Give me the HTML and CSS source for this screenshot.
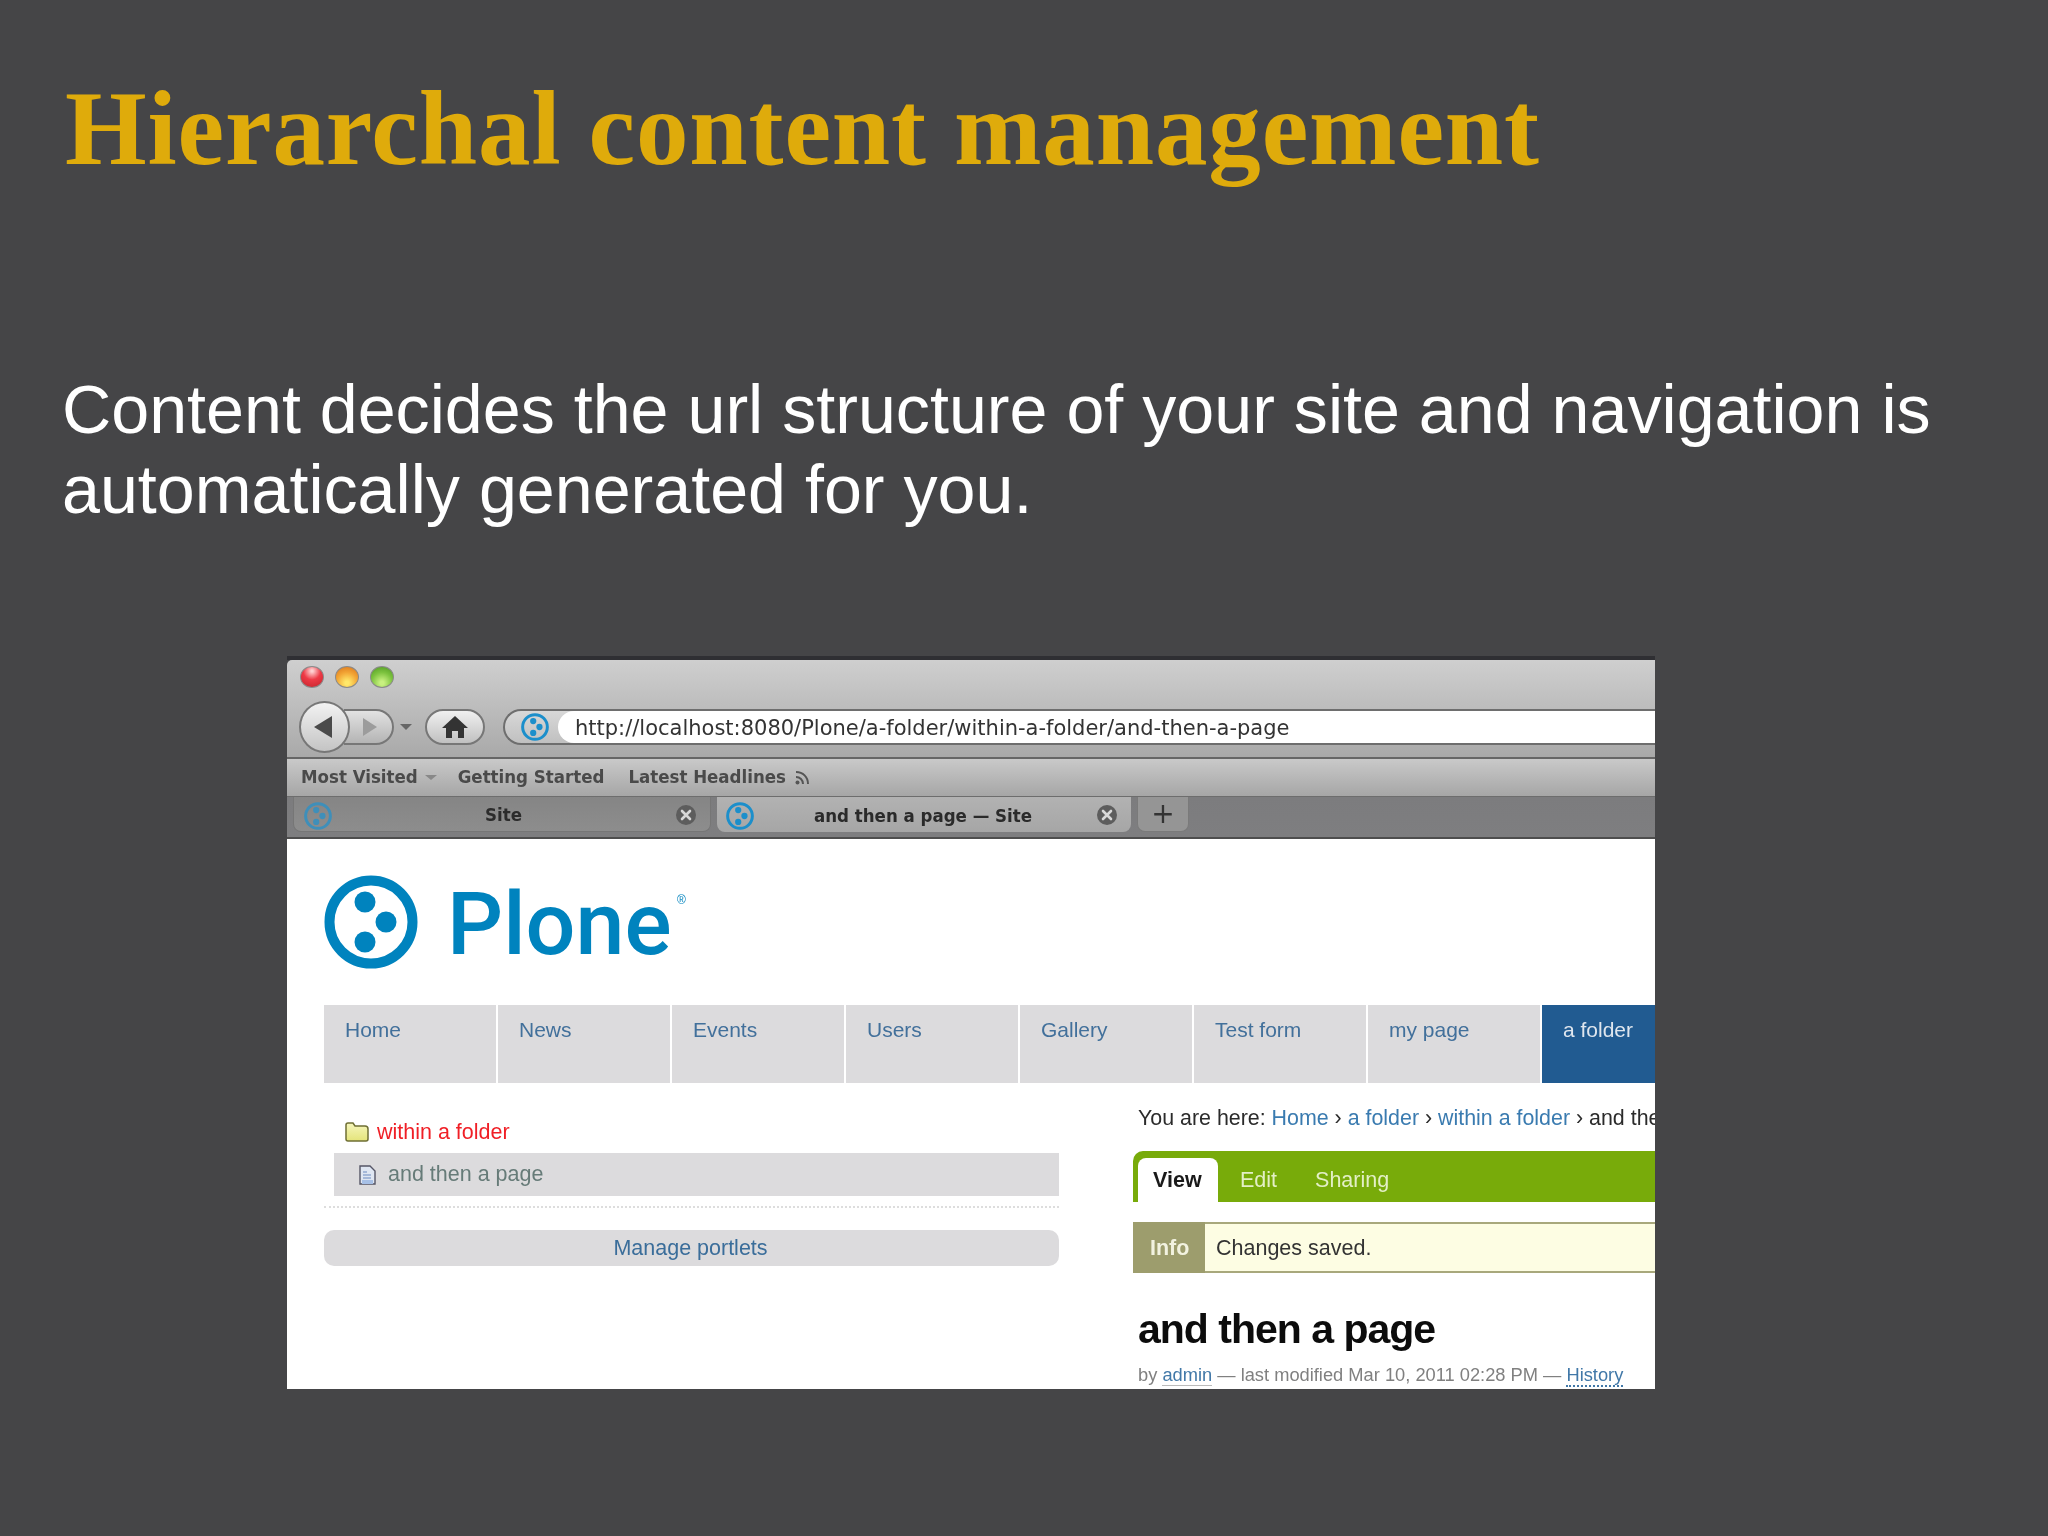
FILE: index.html
```html
<!DOCTYPE html>
<html lang="en">
<head>
<meta charset="utf-8">
<title>Hierarchal content management</title>
<link rel="stylesheet" href="styles.css">
</head>
<body>
<svg class="defs" width="0" height="0" aria-hidden="true">
  <symbol id="plone" viewBox="0 0 94 94">
    <circle cx="47" cy="47" r="41.500" fill="none" stroke="currentColor" stroke-width="10"/>
    <ellipse cx="41" cy="27" rx="10.500" ry="10.500" fill="currentColor"/>
    <ellipse cx="62" cy="47" rx="10.500" ry="10.500" fill="currentColor"/>
    <ellipse cx="41" cy="67" rx="10.500" ry="10.500" fill="currentColor"/>
  </symbol>
  <symbol id="close" viewBox="0 0 20 20">
    <circle cx="10" cy="10" r="10" fill="currentColor"/>
    <path d="M6 6l8 8M14 6l-8 8" stroke="#d8d8d8" stroke-width="2.6" stroke-linecap="round"/>
  </symbol>
</svg>
<main class="slide">
  <h1 class="title">Hierarchal content management</h1>
  <p class="lead">Content decides the url structure of your site and navigation is automatically generated for you.</p>
  <section class="shot">
    <header class="toolbar">
      <div class="lights"><span class="light red"></span><span class="light amber"></span><span class="light green"></span></div>
      <div class="navrow">
        <div class="backfwd">
          <span class="back"><svg width="20" height="24" viewBox="0 0 20 24"><path d="M19 1v22L1 12z" fill="#4a4a4a"/></svg></span>
          <span class="fwd"><svg width="16" height="20" viewBox="0 0 16 20"><path d="M1 1v18l14-9z" fill="#9c9c9c"/></svg></span>
        </div>
        <svg class="drop" width="12" height="6" viewBox="0 0 12 6"><path d="M0 0h12L6 6z" fill="#666"/></svg>
        <span class="home"><svg width="26" height="24" viewBox="0 0 26 24"><path d="M13 1L0 13h4v10h6v-7h6v7h6V13h4z" fill="#333"/></svg></span>
        <div class="url">
          <span class="site"><svg class="fav" width="28" height="28"><use href="#plone"/></svg></span>
          <span class="address">http://localhost:8080/Plone/a-folder/within-a-folder/and-then-a-page</span>
        </div>
      </div>
    </header>
    <nav class="bookmarks">
      <span class="bm">Most Visited</span>
      <svg class="bm-arrow" width="12" height="5" viewBox="0 0 12 5"><path d="M0 0h12L6 5z" fill="#888"/></svg>
      <span class="bm bm-2">Getting Started</span>
      <span class="bm bm-3">Latest Headlines</span>
      <svg class="rss" width="16" height="16" viewBox="0 0 16 16"><g fill="none" stroke="#555" stroke-width="2"><path d="M2 2c7 0 12 5 12 12"/><path d="M2 7c4 0 7 3 7 7"/></g><circle cx="3.500" cy="12.500" r="2" fill="#555"/></svg>
    </nav>
    <div class="tabs">
      <div class="tab off">
        <svg class="fav dim" width="28" height="28"><use href="#plone"/></svg>
        <span class="tab-label">Site</span>
        <svg class="close dark" width="20" height="20"><use href="#close"/></svg>
      </div>
      <div class="tab on">
        <svg class="fav" width="28" height="28"><use href="#plone"/></svg>
        <span class="tab-label strong">and then a page — Site</span>
        <svg class="close" width="20" height="20"><use href="#close"/></svg>
      </div>
      <div class="newtab">+</div>
    </div>
    <div class="page">
      <div class="logo">
        <svg class="logo-mark" width="94" height="94"><use href="#plone"/></svg>
        <span class="logo-word">Plone</span><span class="logo-reg">®</span>
      </div>
      <ul class="globalnav">
        <li>Home</li><li>News</li><li>Events</li><li>Users</li><li>Gallery</li><li>Test form</li><li>my page</li><li class="active">a folder</li>
      </ul>
      <div class="columns">
        <aside class="left">
          <div class="tree-folder">
            <svg width="24" height="20" viewBox="0 0 24 20"><defs><linearGradient id="fy" x1="0" y1="0" x2="0" y2="1"><stop offset="0" stop-color="#f6f6bc"/><stop offset="1" stop-color="#e4e47a"/></linearGradient></defs><path d="M1 17V3q0-2 2-2h5l2 3h10q3 0 3 3v10q0 2-2 2H3q-2 0-2-2z" fill="url(#fy)" stroke="#6f6f34" stroke-width="1.500"/></svg>
            <span>within a folder</span>
          </div>
          <div class="tree-page">
            <svg width="17" height="20" viewBox="0 0 17 20"><path d="M1 1h10l5 5v13H1z" fill="#dfe6f2" stroke="#556" stroke-width="1.400"/><path d="M3 15h11v4H3z" fill="#a7c0e6"/><path d="M4 7h4M4 10h8M4 13h8" stroke="#6c8ac0" stroke-width="1.200"/></svg>
            <span>and then a page</span>
          </div>
          <div class="dots"></div>
          <div class="manage">Manage portlets</div>
        </aside>
        <article class="right">
          <div class="crumbs">You are here: <a>Home</a> › <a>a folder</a> › <a>within a folder</a> › and then a page</div>
          <div class="views"><span class="view">View</span><span class="v-edit">Edit</span><span class="v-share">Sharing</span></div>
          <div class="info"><strong>Info</strong><span>Changes saved.</span></div>
          <h2 class="doc-title">and then a page</h2>
          <div class="byline">by <a class="solid">admin</a> — last modified Mar 10, 2011 02:28 PM — <a class="dotted">History</a></div>
        </article>
      </div>
    </div>
  </section>
</main>
</body>
</html>
```
FILE: styles.css
```css
* { box-sizing: border-box; }
html, body { margin: 0; padding: 0; background: #454547; }
.defs { position: absolute; }
.slide { width: 2048px; height: 1536px; overflow: hidden; background: #454547; }
.title {
  margin: 0 0 0 65px; padding-top: 69px; font: 700 105px/120px "Liberation Serif", serif;
  color: #dfab0b; letter-spacing: .85px; white-space: nowrap;
}
.lead {
  margin: 180px 0 0 62px; width: 1960px; font: 400 68.200px/80px "Liberation Sans", sans-serif; color: #fff;
}
.shot {
  margin: 127px 0 0 287px; width: 1368px; height: 733px; overflow: hidden;
  border-top: 4px solid #2f2f33; filter: blur(.5px); font-family: "Liberation Sans", sans-serif;
}
.toolbar {
  height: 99px; padding: 6px 0 0 12px; background: linear-gradient(#cfcfcf, #a9a9a9);
  border-radius: 5px 0 0 0; border-bottom: 2px solid #666;
}
.lights { display: flex; gap: 11px; height: 22px; margin: 0 0 13px 1px; }
.light { width: 24px; height: 22px; border-radius: 50%; border: 1px solid #8a8a8a; }
.red { background: radial-gradient(circle at 50% 20%, #ffd0d0 5%, #ee3a46 45%, #c2242c); }
.amber { background: radial-gradient(circle at 50% 80%, #ffe86a 10%, #f2a434 55%, #d8701a); }
.green { background: radial-gradient(circle at 50% 80%, #c8f080 10%, #7cc23e 55%, #4c9620); }
.navrow { display: flex; align-items: center; height: 52px; }
.backfwd { display: flex; align-items: center; }
.back {
  position: relative; z-index: 1; display: flex; align-items: center; justify-content: center;
  width: 51px; height: 52px; padding-right: 4px; border-radius: 50%; border: 2px solid #777;
  background: linear-gradient(#f2f2f2, #c4c4c4);
}
.fwd {
  display: flex; align-items: center; justify-content: center;
  width: 50px; height: 36px; margin-left: -6px; padding-left: 4px; border-radius: 0 18px 18px 0;
  border: 2px solid #777; border-left: 0; background: linear-gradient(#e2e2e2, #b4b4b4);
}
.drop { margin-left: 6px; }
.home {
  display: flex; align-items: center; justify-content: center;
  width: 60px; height: 36px; margin-left: 13px; border-radius: 18px; border: 2px solid #777;
  background: linear-gradient(#f0f0f0, #c0c0c0);
}
.url {
  display: flex; flex: 1; height: 36px; margin-left: 18px; border: 2px solid #6e6e6e; border-right: 0;
  border-radius: 18px 0 0 18px; background: linear-gradient(#d8d8d8, #c0c0c0);
}
.site { display: flex; align-items: center; width: 53px; padding-left: 16px; }
.fav { color: #1c8fcb; flex: none; }
.fav.dim { color: #3e8fba; }
.address {
  flex: 1; padding-left: 17px; border-radius: 16px 0 0 16px; background: #fff; white-space: nowrap;
  font: 400 21px/34px "DejaVu Sans", sans-serif; color: #333;
}
.bookmarks {
  display: flex; align-items: center; height: 37px; padding-left: 14px;
  background: linear-gradient(#c9c9c9, #a6a6a6);
  font: 700 18.500px/1 "DejaVu Sans Condensed", "DejaVu Sans", sans-serif; color: #4a4a4a;
}
.bm-arrow { margin: 0 0 0 7px; }
.bm-2 { margin-left: 21px; }
.bm-3 { margin-left: 24px; }
.rss { margin-left: 8px; }
.tabs {
  display: flex; height: 43px; padding-left: 6px; background: linear-gradient(#7c7c7e, #7e7e80);
  border-top: 1px solid #6d6d6d; border-bottom: 2px solid #4e4e4e;
}
.tab {
  position: relative; display: flex; align-items: center; height: 35px; border-radius: 0 0 8px 8px;
  padding: 3px 0 0 10px;
  font: 700 18.500px/1 "DejaVu Sans Condensed", "DejaVu Sans", sans-serif;
}
.tab-label { color: #333; }
.off { width: 418px; background: linear-gradient(#858585, #8d8d8d); border: 1px solid #767676; border-top: 0; }
.off .tab-label { margin-left: 153px; color: #2c2c2c; }
.on { width: 414px; margin-left: 6px; background: linear-gradient(#b2b2b2, #a6a6a6); padding-left: 9px; }
.strong { margin-left: 60px; color: #2a2a2a; }
.close { position: absolute; top: 8px; color: #5d5d5d; }
.off .close { right: 14px; }
.on .close { right: 14px; }
.newtab {
  display: flex; align-items: center; justify-content: center; width: 52px; height: 35px; margin-left: 6px;
  border-radius: 0 0 8px 8px; background: #959595; border: 1px solid #7a7a7a; border-top: 0;
  font: 400 28px/1 "DejaVu Sans", sans-serif; color: #333;
}
.page { height: 550px; padding: 36px 0 0 37px; background: #fff; overflow: hidden; }
.logo { position: relative; display: flex; align-items: flex-start; height: 93px; color: #0083be; }
.logo-mark { flex: none; }
.logo-word { margin: -8px 0 0 29px; font: 500 88px/113px Roboto, sans-serif; }
.logo-reg { position: absolute; left: 353px; top: 19px; font: 400 12px/1 "Liberation Sans", sans-serif; }
.globalnav {
  display: flex; gap: 2px; margin: 37px 0 0; padding: 0; list-style: none; height: 78px; font-size: 21px; color: #42709b;
}
.globalnav li { flex: 0 0 172px; padding: 12px 0 0 21px; line-height: 26px; background: #dcdbdd; }
.globalnav .active { background: #215b91; color: #dfe6ee; }
.columns { display: flex; gap: 74px; }
.left { flex: 0 0 735px; font-size: 21.500px; }
.right { flex: 1; min-width: 0; overflow: hidden; }
.tree-folder { display: flex; align-items: center; gap: 8px; height: 24px; margin: 37px 0 0 21px; color: #f01f26; }
.tree-page {
  display: flex; align-items: center; gap: 12px; height: 43px; margin: 9px 0 0 10px; padding-left: 25px;
  background: #dcdbdd; color: #667b78;
}
.dots { height: 2px; margin-top: 10px; border-top: 2px dotted #ddd; }
.manage {
  height: 36px; margin-top: 22px; border-radius: 10px; background: #dcdbdd; color: #3a6d9a; text-align: center; line-height: 36px; padding-right: 2px;
}
.crumbs { margin: 22px 0 0 5px; font-size: 21.400px; line-height: 26px; white-space: nowrap; color: #2b2b2b; }
.crumbs a { color: #3a7bb0; }
.views {
  display: flex; align-items: flex-end; height: 51px; margin-top: 20px; padding-left: 5px; background: #78ab0a;
  border-radius: 10px 0 0 0; font-size: 21.500px; color: #e3efc6;
}
.view {
  width: 80px; height: 44px; padding: 9px 0 0 15px; line-height: 26px; background: #fff; color: #1a1a1a; font-weight: 700;
  border-radius: 8px 8px 0 0;
}
.v-edit { height: 44px; padding-top: 9px; margin-left: 22px; line-height: 26px; }
.v-share { height: 44px; padding-top: 9px; margin-left: 38px; line-height: 26px; }
.info {
  display: flex; height: 51px; margin-top: 20px; background: #fdfde3; border: solid #a8a87c; border-width: 2px 0;
  font-size: 21.500px; line-height: 48px; color: #333;
}
.info strong { width: 72px; padding-left: 17px; margin: -2px 0; line-height: 52px; background: #9d9d6d; color: #f2f2e0; }
.info span { margin-left: 11px; }
.doc-title {
  margin: 31px 0 0 5px; font: 700 41px/50px "Liberation Sans", sans-serif; letter-spacing: -1px; color: #0c0c0c; white-space: nowrap;
}
.byline { margin: 9px 0 0 5px; font-size: 18.300px; line-height: 24px; color: #808080; white-space: nowrap; }
.byline a { color: #4178a8; }
.solid { border-bottom: 1px solid #bbb; }
.dotted { border-bottom: 2px dotted #4178a8; }
```
